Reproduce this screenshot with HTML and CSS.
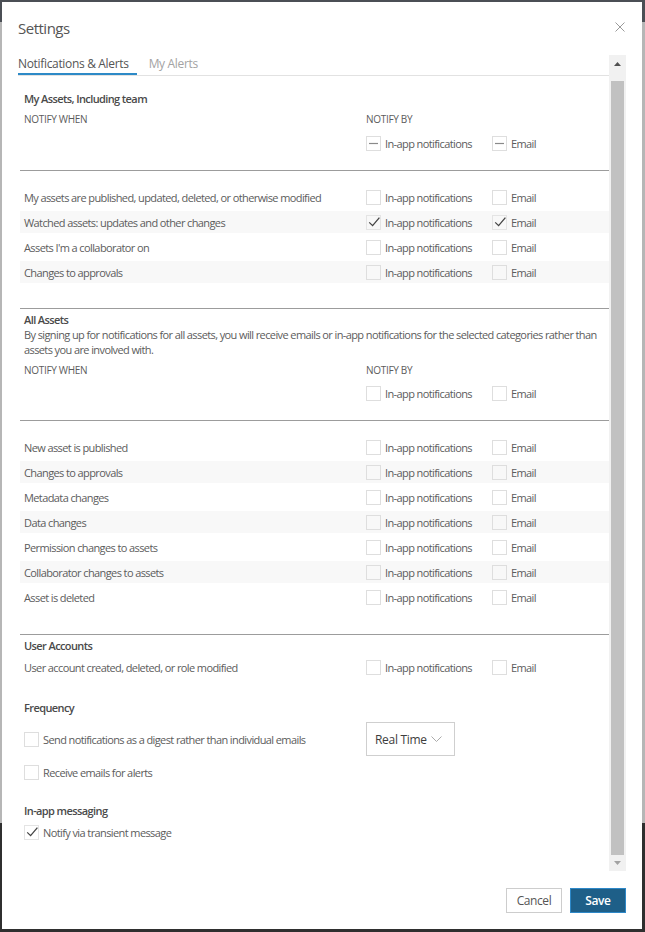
FILE: index.html
```html
<!DOCTYPE html>
<html lang="en">
<head>
<meta charset="utf-8">
<title>Settings</title>
<link rel="stylesheet" href="styles.css">
</head>
<body>
<div class="modal">
  <header class="modal-header">
    <h1 class="modal-title">Settings</h1>
    <button class="close-btn" aria-label="Close">
      <svg width="10" height="10" viewBox="0 0 10 10"><path d="M0.5 0.5L9.5 9.5M9.5 0.5L0.5 9.5" stroke="#9a9a9a" stroke-width="1" fill="none"/></svg>
    </button>
  </header>

  <div class="modal-body">
    <div class="scroll-content">
      <nav class="tabs">
        <span class="tab active">Notifications &amp; Alerts</span>
        <span class="tab">My Alerts</span>
      </nav>

      <section class="group group-first">
        <h2 class="group-title">My Assets, Including team</h2>
        <div class="head-grid">
          <div class="caps">NOTIFY WHEN</div>
          <div class="notify-by">
            <div class="caps">NOTIFY BY</div>
            <div class="opts">
              <label class="opt"><span class="cb"><svg width="13" height="13" viewBox="0 0 13 13"><path d="M2 6.5H11" stroke="#8a8a8a" stroke-width="1.2"/></svg></span>In-app notifications</label>
              <label class="opt"><span class="cb"><svg width="13" height="13" viewBox="0 0 13 13"><path d="M2 6.5H11" stroke="#8a8a8a" stroke-width="1.2"/></svg></span>Email</label>
            </div>
          </div>
        </div>
      </section>

      <div class="rows">
        <div class="row"><span class="row-label">My assets are published, updated, deleted, or otherwise modified</span><label class="opt"><span class="cb"></span>In-app notifications</label><label class="opt"><span class="cb"></span>Email</label></div>
        <div class="row alt"><span class="row-label">Watched assets: updates and other changes</span><label class="opt"><span class="cb checked"><svg width="15" height="15" viewBox="0 0 15 15"><path d="M2.2 7.4L5.6 10.6L12.4 2.6" stroke="#444" stroke-width="1.3" fill="none"/></svg></span>In-app notifications</label><label class="opt"><span class="cb checked"><svg width="15" height="15" viewBox="0 0 15 15"><path d="M2.2 7.4L5.6 10.6L12.4 2.6" stroke="#444" stroke-width="1.3" fill="none"/></svg></span>Email</label></div>
        <div class="row"><span class="row-label">Assets I'm a collaborator on</span><label class="opt"><span class="cb"></span>In-app notifications</label><label class="opt"><span class="cb"></span>Email</label></div>
        <div class="row alt"><span class="row-label">Changes to approvals</span><label class="opt"><span class="cb"></span>In-app notifications</label><label class="opt"><span class="cb"></span>Email</label></div>
      </div>

      <section class="group">
        <h2 class="group-title">All Assets</h2>
        <p class="group-desc">By signing up for notifications for all assets, you will receive emails or in-app notifications for the selected categories rather than assets you are involved with.</p>
        <div class="head-grid head-grid-2">
          <div class="caps">NOTIFY WHEN</div>
          <div class="notify-by">
            <div class="caps">NOTIFY BY</div>
            <div class="opts opts-2">
              <label class="opt"><span class="cb"></span>In-app notifications</label>
              <label class="opt"><span class="cb"></span>Email</label>
            </div>
          </div>
        </div>
      </section>

      <div class="rows rows-all">
        <div class="row"><span class="row-label">New asset is published</span><label class="opt"><span class="cb"></span>In-app notifications</label><label class="opt"><span class="cb"></span>Email</label></div>
        <div class="row alt"><span class="row-label">Changes to approvals</span><label class="opt"><span class="cb"></span>In-app notifications</label><label class="opt"><span class="cb"></span>Email</label></div>
        <div class="row"><span class="row-label">Metadata changes</span><label class="opt"><span class="cb"></span>In-app notifications</label><label class="opt"><span class="cb"></span>Email</label></div>
        <div class="row alt"><span class="row-label">Data changes</span><label class="opt"><span class="cb"></span>In-app notifications</label><label class="opt"><span class="cb"></span>Email</label></div>
        <div class="row"><span class="row-label">Permission changes to assets</span><label class="opt"><span class="cb"></span>In-app notifications</label><label class="opt"><span class="cb"></span>Email</label></div>
        <div class="row alt"><span class="row-label">Collaborator changes to assets</span><label class="opt"><span class="cb"></span>In-app notifications</label><label class="opt"><span class="cb"></span>Email</label></div>
        <div class="row"><span class="row-label">Asset is deleted</span><label class="opt"><span class="cb"></span>In-app notifications</label><label class="opt"><span class="cb"></span>Email</label></div>
      </div>

      <section class="group group-users">
        <h2 class="group-title">User Accounts</h2>
        <div class="row row-user"><span class="row-label">User account created, deleted, or role modified</span><label class="opt"><span class="cb"></span>In-app notifications</label><label class="opt"><span class="cb"></span>Email</label></div>
      </section>

      <section class="group group-freq">
        <h2 class="group-title">Frequency</h2>
        <div class="freq-row">
          <label class="opt freq-opt"><span class="cb"></span>Send notifications as a digest rather than individual emails</label>
          <div class="select">
            <span>Real Time</span>
            <svg width="11" height="6" viewBox="0 0 11 6"><path d="M0.5 0.5L5.5 5.5L10.5 0.5" stroke="#ababab" stroke-width="1" fill="none"/></svg>
          </div>
        </div>
        <label class="opt single-opt"><span class="cb"></span>Receive emails for alerts</label>
      </section>

      <section class="group group-msg">
        <h2 class="group-title">In-app messaging</h2>
        <label class="opt single-opt msg-opt"><span class="cb checked"><svg width="15" height="15" viewBox="0 0 15 15"><path d="M2.2 7.4L5.6 10.6L12.4 2.6" stroke="#444" stroke-width="1.3" fill="none"/></svg></span>Notify via transient message</label>
      </section>
    </div>

    <div class="scrollbar">
      <div class="sb-btn"><svg width="7" height="4" viewBox="0 0 7 4"><path d="M0 4L3.5 0L7 4Z" fill="#505050"/></svg></div>
      <div class="sb-gap"></div>
      <div class="sb-thumb"></div>
      <div class="sb-btn sb-btn-down"><svg width="7" height="4" viewBox="0 0 7 4"><path d="M0 0L3.5 4L7 0Z" fill="#a3a3a3"/></svg></div>
    </div>
  </div>

  <footer class="modal-footer">
    <button class="btn btn-cancel">Cancel</button>
    <button class="btn btn-save">Save</button>
  </footer>
</div>
</body>
</html>
```

FILE: styles.css
```css
* {
  box-sizing: border-box;
  margin: 0;
  padding: 0;
}

html, body {
  height: 100%;
}

body {
  font-family: "Open Sans", "Noto Sans", sans-serif;
  font-size: 11px;
  letter-spacing: -0.6px;
  color: #5c5c5c;
  overflow: hidden;
  background: linear-gradient(to bottom,
    #4b4f55 0, #4b4f55 22px,
    #b6b6b6 22px, #b6b6b6 823px,
    #2f2f2f 823px);
}

.modal {
  margin: 2px 0 0 2px;
  width: 640px;
  height: 927px;
  background: #fff;
  display: flex;
  flex-direction: column;
}

/* header */
.modal-header {
  flex: none;
  height: 53px;
  padding: 15px 17px 0 16px;
  display: flex;
  justify-content: space-between;
  align-items: flex-start;
}

.modal-title {
  font-size: 15px;
  line-height: 22px;
  font-weight: 400;
  letter-spacing: -0.5px;
  color: #555;
}

.close-btn {
  display: block;
  width: 10px;
  height: 10px;
  margin-top: 5px;
  border: 0;
  background: none;
}

.close-btn svg {
  display: block;
}

/* body */
.modal-body {
  flex: 1;
  min-height: 0;
  display: flex;
  padding: 0 16px;
}

.scroll-content {
  flex: 1;
  min-width: 0;
  overflow: hidden;
}

/* tabs */
.tabs {
  display: flex;
  border-bottom: 1px solid #e2e2e2;
}

.tab {
  font-size: 12px;
  line-height: 18px;
  letter-spacing: -0.33px;
  color: #a3a3a3;
  border-bottom: 2px solid transparent;
  padding-right: 8px;
}

.tab + .tab {
  margin-left: 12px;
}

.tab.active {
  color: #555;
  border-bottom-color: #2d8ac7;
}

/* groups */
.group {
  margin-left: 2px;
  padding-left: 4px;
}

.group-first {
  margin-top: 15px;
}

.group-title {
  font-size: 11px;
  line-height: 15px;
  font-weight: 600;
  letter-spacing: -0.6px;
  color: #4a4a4a;
  margin-top: 3px;
}

.group-first .group-title {
  margin-top: 0;
}

.group-desc {
  line-height: 15px;
  padding-right: 2px;
}

.head-grid {
  display: grid;
  grid-template-columns: 342px 1fr;
  margin-top: 6px;
  margin-bottom: 16px;
}

.caps {
  font-size: 10px;
  line-height: 15px;
  letter-spacing: -0.3px;
  text-transform: uppercase;
}

.opts {
  display: grid;
  grid-template-columns: 126px 1fr;
  height: 22px;
  margin-top: 5px;
}

.opts-2 {
  margin-top: 4px;
}

.opt {
  display: flex;
  align-items: center;
  gap: 4px;
  white-space: nowrap;
}

.cb {
  flex: none;
  width: 15px;
  height: 15px;
  border: 1px solid #dedede;
  display: flex;
  align-items: center;
  justify-content: center;
}

.cb.checked {
  border-color: #e4e4e4;
  position: relative;
}

.cb.checked svg {
  position: absolute;
  left: 0;
  top: -1px;
}

/* rows */
.rows {
  margin-left: 2px;
  border-top: 1px solid #9c9c9c;
  border-bottom: 1px solid #9c9c9c;
  padding: 15px 0 25px;
  display: flex;
  flex-direction: column;
  gap: 3px;
}

.rows-all {
  padding-bottom: 26px;
}

.row {
  display: grid;
  grid-template-columns: 346px 126px 1fr;
  height: 22px;
  align-items: center;
}

.row.alt {
  background: #f8f8f8;
}

.row-label {
  padding-left: 4px;
  white-space: nowrap;
}

.group-users .group-title {
  margin-top: 3px;
}

.row-user {
  margin-top: 3px;
  margin-left: -4px;
}

/* frequency */
.group-freq .group-title {
  margin-top: 22px;
}

.freq-row {
  display: grid;
  grid-template-columns: 342px auto;
  justify-content: start;
  align-items: center;
  height: 34px;
  margin-top: 7px;
}

.select {
  width: 89px;
  height: 34px;
  border: 1px solid #cfcfcf;
  display: flex;
  align-items: center;
  padding: 0 12px 0 8px;
  justify-content: space-between;
  font-size: 12px;
  letter-spacing: -0.3px;
  color: #3d3d3d;
}

.select svg {
  display: block;
}

.single-opt {
  height: 22px;
  margin-top: 5px;
}

.group-msg .group-title {
  margin-top: 20px;
}

.msg-opt {
  margin-top: 3px;
}

/* fake scrollbar */
.scrollbar {
  flex: none;
  width: 17px;
  background: #f1f1f1;
  display: flex;
  flex-direction: column;
}

.sb-btn {
  flex: none;
  height: 17px;
  display: flex;
  align-items: center;
  justify-content: center;
}

.sb-btn svg {
  display: block;
}

.sb-btn-down {
  height: 16px;
}

.sb-gap {
  flex: none;
  height: 9px;
}

.sb-thumb {
  flex: 1;
  margin: 0 2px;
  background: #c1c1c1;
}

/* footer */
.modal-footer {
  flex: none;
  display: flex;
  justify-content: flex-end;
  gap: 8px;
  padding: 17px 16px 16px;
}

.btn {
  width: 56px;
  height: 25px;
  font-family: inherit;
  font-size: 12px;
  letter-spacing: -0.4px;
  line-height: 23px;
  cursor: pointer;
}

.btn-cancel {
  background: #fff;
  border: 1px solid #cdcdcd;
  color: #555;
}

.btn-save {
  background: #1e5f88;
  border: 1px solid #2d88c8;
  color: #fff;
  font-weight: 600;
}
```
